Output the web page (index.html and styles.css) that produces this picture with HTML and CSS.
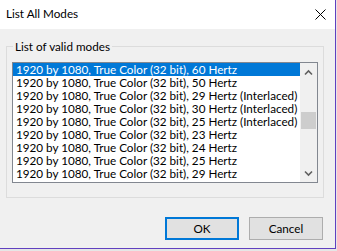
FILE: index.html
```html
<!DOCTYPE html>
<html>
<head>
<meta charset="utf-8">
<link rel="stylesheet" href="styles.css">
</head>
<body>
<div class="window">
  <div class="titlebar">
    <span class="title">List All Modes</span>
    <svg class="close" width="11" height="11" viewBox="0 0 11 11"><path d="M0.5 0.5 L10.5 10.5 M10.5 0.5 L0.5 10.5" stroke="#000" stroke-width="1" fill="none"/></svg>
  </div>
  <div class="client">
    <fieldset class="group">
      <legend class="group-label">List of valid modes</legend>
      <div class="listbox">
        <div class="rows">
          <div class="row selected">1920 by 1080, True Color (32 bit), 60 Hertz</div>
          <div class="row">1920 by 1080, True Color (32 bit), 50 Hertz</div>
          <div class="row">1920 by 1080, True Color (32 bit), 29 Hertz (Interlaced)</div>
          <div class="row">1920 by 1080, True Color (32 bit), 30 Hertz (Interlaced)</div>
          <div class="row">1920 by 1080, True Color (32 bit), 25 Hertz (Interlaced)</div>
          <div class="row">1920 by 1080, True Color (32 bit), 23 Hertz</div>
          <div class="row">1920 by 1080, True Color (32 bit), 24 Hertz</div>
          <div class="row">1920 by 1080, True Color (32 bit), 25 Hertz</div>
          <div class="row">1920 by 1080, True Color (32 bit), 29 Hertz</div>
        </div>
        <div class="scrollbar">
          <div class="sb-btn"><svg width="17" height="17" viewBox="0 0 17 17"><path d="M5 11.5 L8.5 8 L12 11.5" stroke="#606060" stroke-width="1.6" fill="none"/></svg></div>
          <div class="sb-track"><div class="sb-thumb"></div></div>
          <div class="sb-btn"><svg width="17" height="17" viewBox="0 0 17 17"><path d="M5 6.5 L8.5 10 L12 6.5" stroke="#606060" stroke-width="1.6" fill="none"/></svg></div>
        </div>
      </div>
    </fieldset>
    <div class="buttons">
      <div class="btn default">OK</div>
      <div class="btn">Cancel</div>
    </div>
  </div>
</div>
</body>
</html>
```

FILE: styles.css
```css
html, body {
  margin: 0;
  padding: 0;
}
body {
  width: 337px;
  height: 251px;
  background: #e6e6e6;
  font-family: Lato, "Liberation Sans", sans-serif;
  font-size: 11.7px;
  color: #000;
  overflow: hidden;
}
.window {
  width: 335px;
  height: 248px;
  border-right: 1px solid #6040c0;
  border-bottom: 1px solid #6040c0;
  background: #f0f0f0;
  display: flex;
  flex-direction: column;
}
.titlebar {
  height: 29px;
  background: #fff;
  display: flex;
  align-items: center;
  justify-content: space-between;
  flex: none;
}
.title {
  padding-left: 6px;
  line-height: 27px;
  padding-bottom: 2px;
}
.close {
  margin-right: 9px;
  display: block;
}
.client {
  flex: 1;
  display: flex;
  flex-direction: column;
}
.group {
  margin: 11px 0 0 6px;
  width: 306px;
  padding: 0 5px 14px 5px;
  border: 1px solid #dcdcdc;
  box-sizing: content-box;
  min-width: 0;
}
.group-label {
  padding: 0 2px;
  margin-left: 1px;
  line-height: 13px;
  height: 13px;
}
.listbox {
  margin-top: 9px;
  width: 304px;
  height: 119px;
  border: 1px solid #828790;
  background: #fff;
  display: flex;
}
.rows {
  flex: 1;
  min-width: 0;
  overflow: hidden;
}
.row {
  height: 13px;
  line-height: 13px;
  padding-left: 3px;
  white-space: nowrap;
}
.row.selected {
  background: #0078d7;
  color: #fff;
}
.scrollbar {
  width: 17px;
  flex: none;
  background: #f0f0f0;
  display: flex;
  flex-direction: column;
}
.sb-btn {
  height: 17px;
}
.sb-btn svg {
  display: block;
}
.sb-track {
  flex: 1;
}
.sb-thumb {
  margin: 32px auto 0;
  width: 15px;
  height: 17px;
  background: #cdcdcd;
}
.buttons {
  margin-top: 19px;
  display: flex;
  justify-content: flex-end;
  gap: 10px;
  padding-right: 12px;
}
.btn {
  width: 72px;
  height: 21px;
  line-height: 21px;
  text-align: center;
  background: #e1e1e1;
  border: 1px solid #adadad;
}
.btn.default {
  width: 70px;
  height: 19px;
  line-height: 19px;
  border: 2px solid #0078d7;
}
```
